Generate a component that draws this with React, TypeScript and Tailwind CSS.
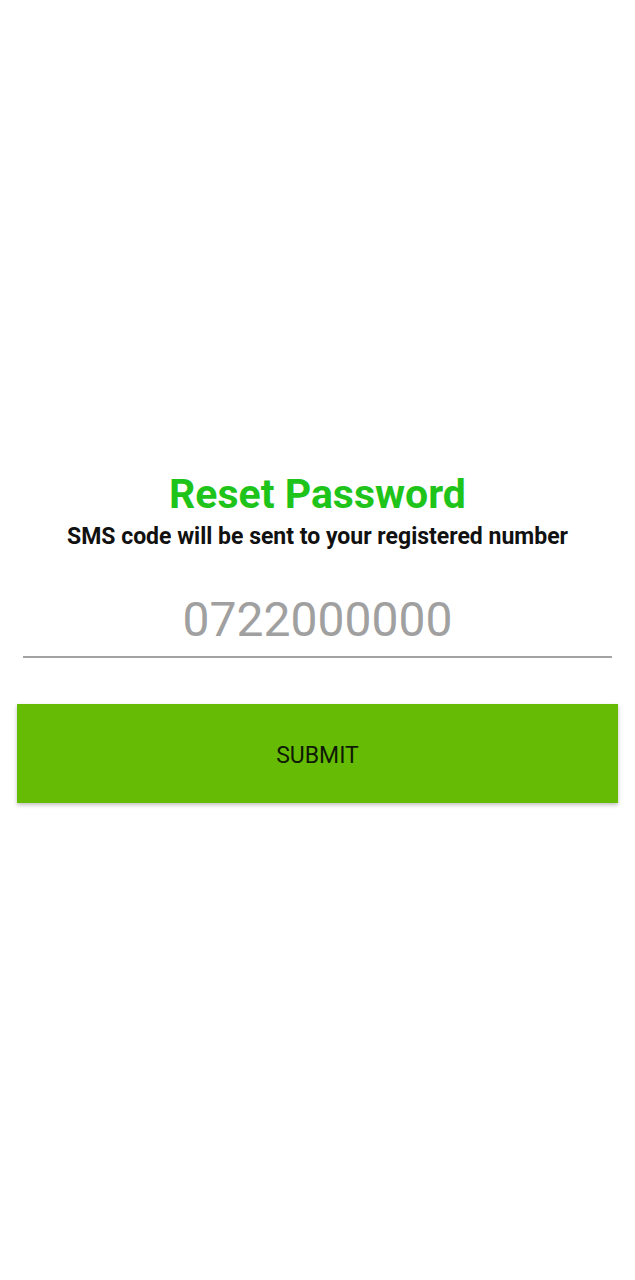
export default function App() {
  return (
    <div className="min-h-[1280px] w-full bg-white font-['Roboto',sans-serif]">
      <div className="flex flex-col items-center pt-[470px]">
        <h1 className="text-[41px] font-bold leading-[48px] text-[#1fc41a]">Reset Password</h1>
        <p className="mt-[5px] text-[23px] font-bold leading-[28px] text-[#111]">
          SMS code will be sent to your registered number
        </p>
      </div>
      <div className="mx-[23px] mt-[39px] border-b-2 border-[#a3a3a3] pb-[6px]">
        <input
          className="w-full bg-transparent text-center text-[48px] leading-[60px] text-[#a0a0a0] outline-none placeholder:text-[#a0a0a0]"
          placeholder="0722000000"
        />
      </div>
      <div className="mx-[17px] mt-[46px]">
        <button className="flex h-[99px] w-full items-center justify-center bg-[#66bc04] pt-[5px] text-[23px] text-[#0f1a05] shadow-[0_2px_4px_rgba(0,0,0,0.25)]">
          SUBMIT
        </button>
      </div>
    </div>
  );
}
